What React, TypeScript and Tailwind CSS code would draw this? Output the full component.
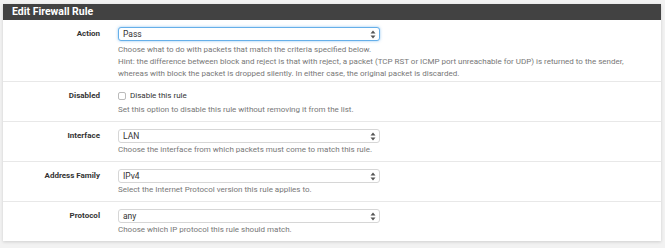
import React from "react";

const font = { fontFamily: "Roboto, 'Liberation Sans', sans-serif" };

const Arrows: React.FC = () => (
  <svg width="6" height="9" viewBox="0 0 6 9" className="shrink-0" aria-hidden="true">
    <path d="M3 0.5 L5.5 3.5 L0.5 3.5 Z" fill="#555" />
    <path d="M3 8.5 L5.5 5.5 L0.5 5.5 Z" fill="#555" />
  </svg>
);

const Select: React.FC<{ value: string; focused?: boolean }> = ({ value, focused }) => (
  <div
    className={
      focused
        ? "w-[262px] h-[14px] flex items-center justify-between pl-[4px] pr-[3px] rounded-[3px] border border-[#66afe9] bg-white shadow-[0_0_3px_rgba(102,175,233,0.7)]"
        : "w-[262px] h-[14px] flex items-center justify-between pl-[4px] pr-[3px] rounded-[3px] border border-[#d6d6d6] bg-white"
    }
  >
    <span className="text-[8.5px] leading-none text-[#333]">{value}</span>
    <Arrows />
  </div>
);

const Row: React.FC<{ label: string; children: React.ReactNode; last?: boolean; tall?: boolean }> = ({
  label,
  children,
  last,
  tall,
}) => (
  <div
    className={
      (tall ? "flex pt-[7px] pb-[1px]" : "flex pt-[7px] pb-[5px]") +
      (last ? "" : " border-b border-[#e8e8e8]")
    }
  >
    <div className="w-[97px] shrink-0 text-right h-[14px] flex items-center justify-end">
      <span className="text-[8px] font-bold text-[#333] leading-none">{label}</span>
    </div>
    <div className="flex-1 ml-[18px] pr-[12px]">{children}</div>
  </div>
);

const Help: React.FC<{ children: React.ReactNode; gap?: boolean }> = ({ children, gap }) => (
  <p className={(gap ? "mt-[3px]" : "mt-[1px]") + " text-[8px] leading-[12px] text-[#777]"}>{children}</p>
);

export default function App() {
  return (
    <div className="w-[665px] h-[248px] bg-[#f2f2f2] pt-[4px] pl-[3px] pr-[4px]" style={font}>
      <div className="bg-white shadow-[0_1px_3px_rgba(0,0,0,0.15)]">
        <div className="h-[16px] bg-[#424242] flex items-center pl-[9px]">
          <span className="text-[10.5px] font-bold text-white leading-none">Edit Firewall Rule</span>
        </div>

        <Row label="Action" tall>
          <Select value="Pass" focused />
          <Help gap>
            Choose what to do with packets that match the criteria specified below.
            <br />
            Hint: the difference between block and reject is that with reject, a packet (TCP RST or ICMP port
            unreachable for UDP) is returned to the sender,
            <br />
            whereas with block the packet is dropped silently. In either case, the original packet is discarded.
          </Help>
        </Row>

        <Row label="Disabled">
          <div className="h-[14px] flex items-center gap-[4px]">
            <span className="w-[8px] h-[8px] rounded-[2px] border border-[#bbb] bg-white" />
            <span className="text-[8px] text-[#333] leading-none">Disable this rule</span>
          </div>
          <Help>Set this option to disable this rule without removing it from the list.</Help>
        </Row>

        <Row label="Interface">
          <Select value="LAN" />
          <Help>Choose the interface from which packets must come to match this rule.</Help>
        </Row>

        <Row label="Address Family">
          <Select value="IPv4" />
          <Help>Select the Internet Protocol version this rule applies to.</Help>
        </Row>

        <Row label="Protocol" last>
          <Select value="any" />
          <Help>Choose which IP protocol this rule should match.</Help>
        </Row>
      </div>
    </div>
  );
}
